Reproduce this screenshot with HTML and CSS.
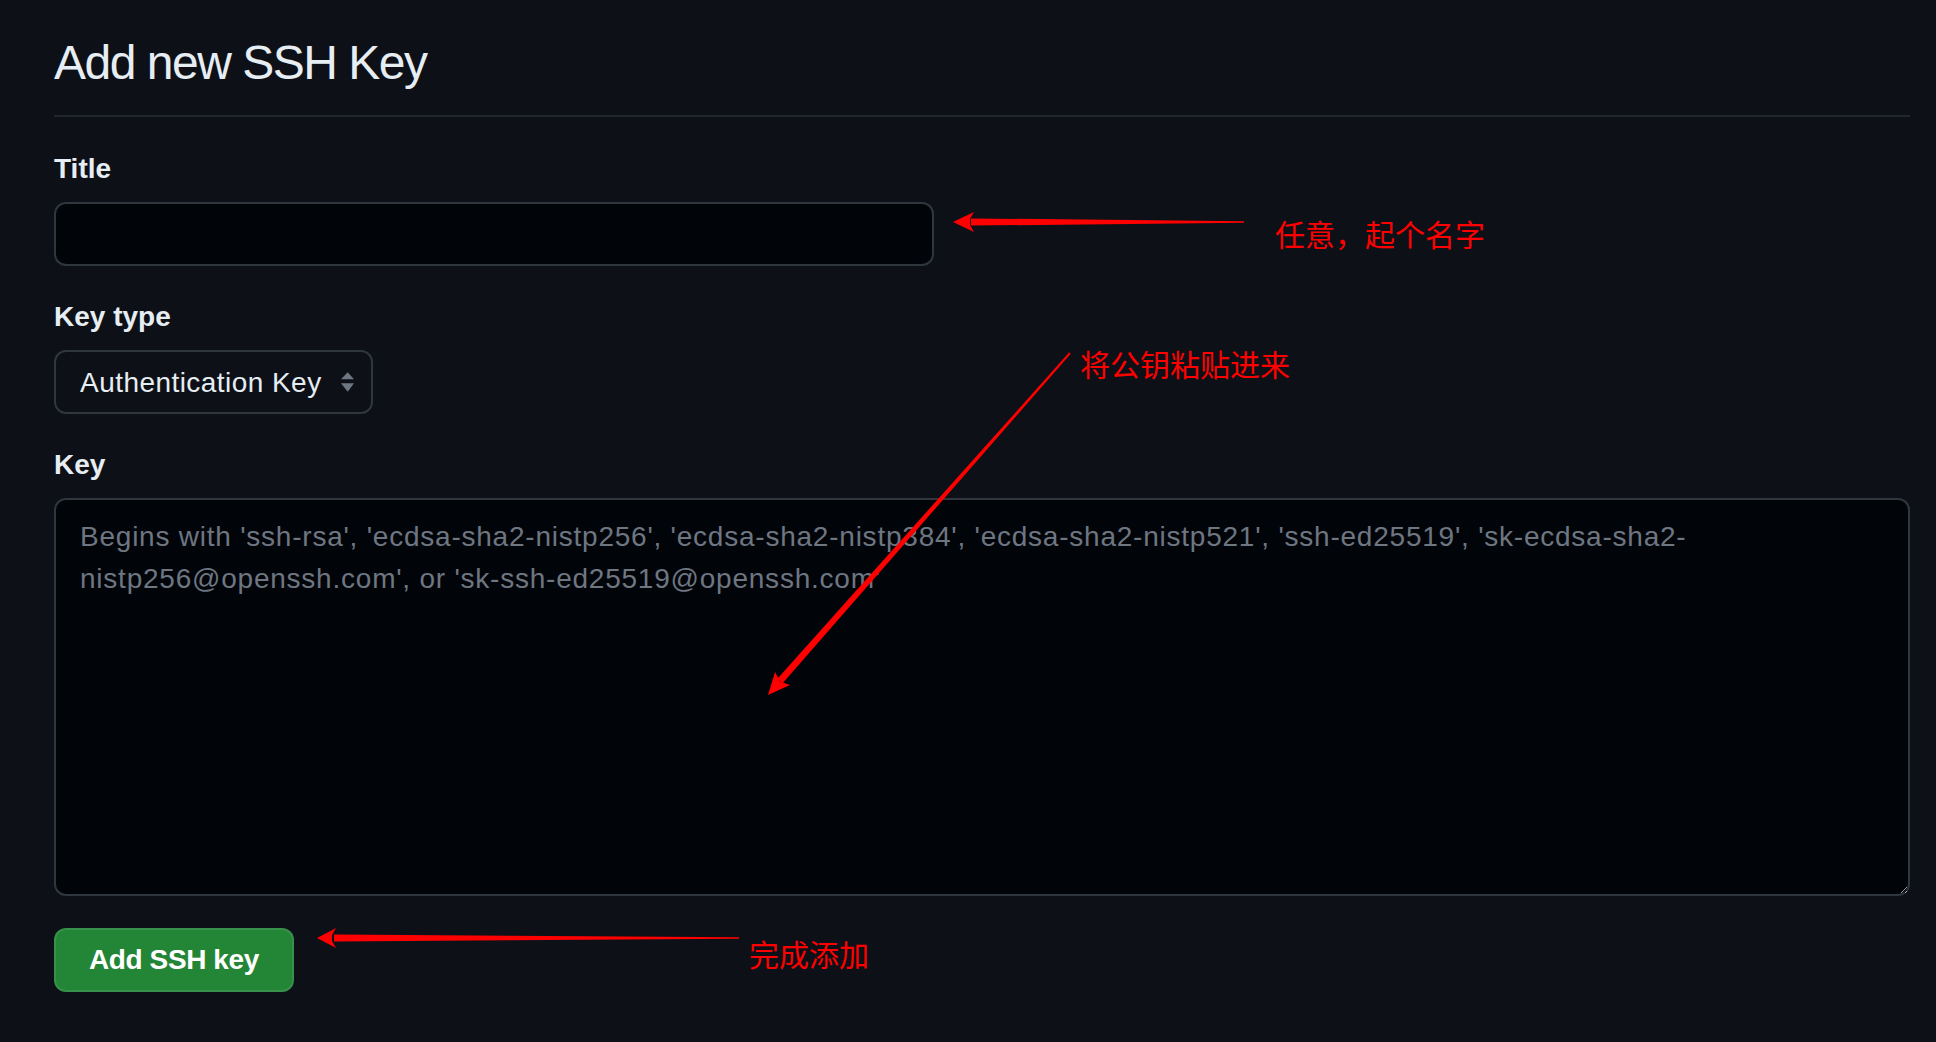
FILE: index.html
```html
<!DOCTYPE html>
<html lang="en">
<head>
<meta charset="utf-8">
<title>Add new SSH Key</title>
<link rel="stylesheet" href="styles.css">
</head>
<body>
<div class="page">
  <h1 class="heading">Add new SSH Key</h1>
  <form class="form">
    <div class="group">
      <label class="label" for="title">Title</label>
      <input class="input" id="title" type="text">
    </div>
    <div class="group">
      <label class="label" for="type">Key type</label>
      <div class="select-wrap">
        <select class="select" id="type">
          <option>Authentication Key</option>
          <option>Signing Key</option>
        </select>
        <svg class="select-arrows" width="18" height="24" viewBox="0 0 18 24">
          <polygon points="2,9.3 8.7,2.3 15,9.3" fill="#6e7681"/>
          <polygon points="2,13.3 15,13.3 8.7,21.7" fill="#6e7681"/>
        </svg>
      </div>
    </div>
    <div class="group">
      <label class="label" for="key">Key</label>
      <textarea class="textarea" id="key" placeholder="Begins with 'ssh-rsa', 'ecdsa-sha2-nistp256', 'ecdsa-sha2-nistp384', 'ecdsa-sha2-nistp521', 'ssh-ed25519', 'sk-ecdsa-sha2-nistp256@openssh.com', or 'sk-ssh-ed25519@openssh.com'"></textarea>
    </div>
    <button class="btn" type="button">Add SSH key</button>
  </form>

  <svg class="annot" width="1936" height="1042" viewBox="0 0 1936 1042">
    <polygon points="1244,221.2 1244,222.8 971,225.6 971,218.4" fill="#ff0000"/>
    <polygon points="953,222 974,212 970,219 970,225 974,232" fill="#ff0000"/>
    <polygon points="1070.75,353.66 1069.25,352.34 777.4,678.7 782.6,683.3" fill="#ff0000"/>
    <polygon points="768,695 775.1,671.9 779.9,681.5 790.1,685.1" fill="#ff0000"/>
    <polygon points="739,937.3 739,938.7 334,941.6 334,934.4" fill="#ff0000"/>
    <polygon points="317,938 336,928 332,935 332,941 336,948" fill="#ff0000"/>
  </svg>
  <span class="note note-title">任意，起个名字</span>
  <span class="note note-key">将公钥粘贴进来</span>
  <span class="note note-btn">完成添加</span>
</div>
</body>
</html>
```
FILE: styles.css
```css
html, body {
  margin: 0;
  padding: 0;
  background: #0d1117;
}
body {
  color-scheme: dark;
  font-family: "Liberation Sans", Arial, sans-serif;
  color: #e6edf3;
}
.page {
  position: relative;
  padding: 27px 26px 50px 54px;
  min-height: 965px;
}
.heading {
  margin: 0;
  font-size: 48px;
  font-weight: 400;
  line-height: 72px;
  letter-spacing: -1.5px;
  padding-bottom: 16px;
  border-bottom: 2px solid #21262d;
  color: #e6edf3;
}
.form {
  display: flex;
  flex-direction: column;
  align-items: flex-start;
}
.group {
  display: flex;
  flex-direction: column;
  align-items: flex-start;
  width: 100%;
  margin-top: 31px;
}
.group:first-child {
  margin-top: 32px;
}
.label {
  font-size: 28px;
  line-height: 40px;
  font-weight: 700;
  margin-bottom: 13px;
  color: #e6edf3;
}
.input {
  box-sizing: border-box;
  width: 880px;
  height: 64px;
  background: #010409;
  border: 2px solid #30363d;
  border-radius: 12px;
  padding: 0 24px;
  font: 28px "Liberation Sans", Arial, sans-serif;
  color: #e6edf3;
  outline: none;
}
.select-wrap {
  position: relative;
}
.select {
  box-sizing: border-box;
  appearance: none;
  -webkit-appearance: none;
  width: 319px;
  height: 64px;
  background: #0d1117;
  border: 2px solid #30363d;
  border-radius: 12px;
  padding: 0 40px 0 24px;
  font: 28px "Liberation Sans", Arial, sans-serif;
  letter-spacing: 0.45px;
  color: #e6edf3;
  outline: none;
}
.select-arrows {
  position: absolute;
  left: 285px;
  top: 20px;
  pointer-events: none;
}
.textarea {
  box-sizing: border-box;
  width: 100%;
  height: 398px;
  background: #010409;
  border: 2px solid #30363d;
  border-radius: 12px;
  padding: 16px 24px;
  font: 28px/42px "Liberation Sans", Arial, sans-serif;
  letter-spacing: 0.77px;
  color: #e6edf3;
  outline: none;
  resize: vertical;
}
.textarea::placeholder {
  color: #6e7681;
}
.btn {
  margin-top: 32px;
  box-sizing: border-box;
  height: 64px;
  padding: 0 33px;
  background: #238636;
  border: 2px solid rgba(240, 246, 252, 0.1);
  border-radius: 12px;
  color: #ffffff;
  font: 700 28px "Liberation Sans", Arial, sans-serif;
  letter-spacing: -0.4px;
}
.annot {
  position: absolute;
  left: 0;
  top: 0;
  pointer-events: none;
}
.note {
  position: absolute;
  font-family: "Noto Sans CJK SC", sans-serif;
  font-size: 30px;
  line-height: 30px;
  color: #ff0000;
  white-space: nowrap;
}
.note-title { left: 1275px; top: 218px; }
.note-key { left: 1080px; top: 348px; }
.note-btn { left: 749px; top: 938px; }
```
